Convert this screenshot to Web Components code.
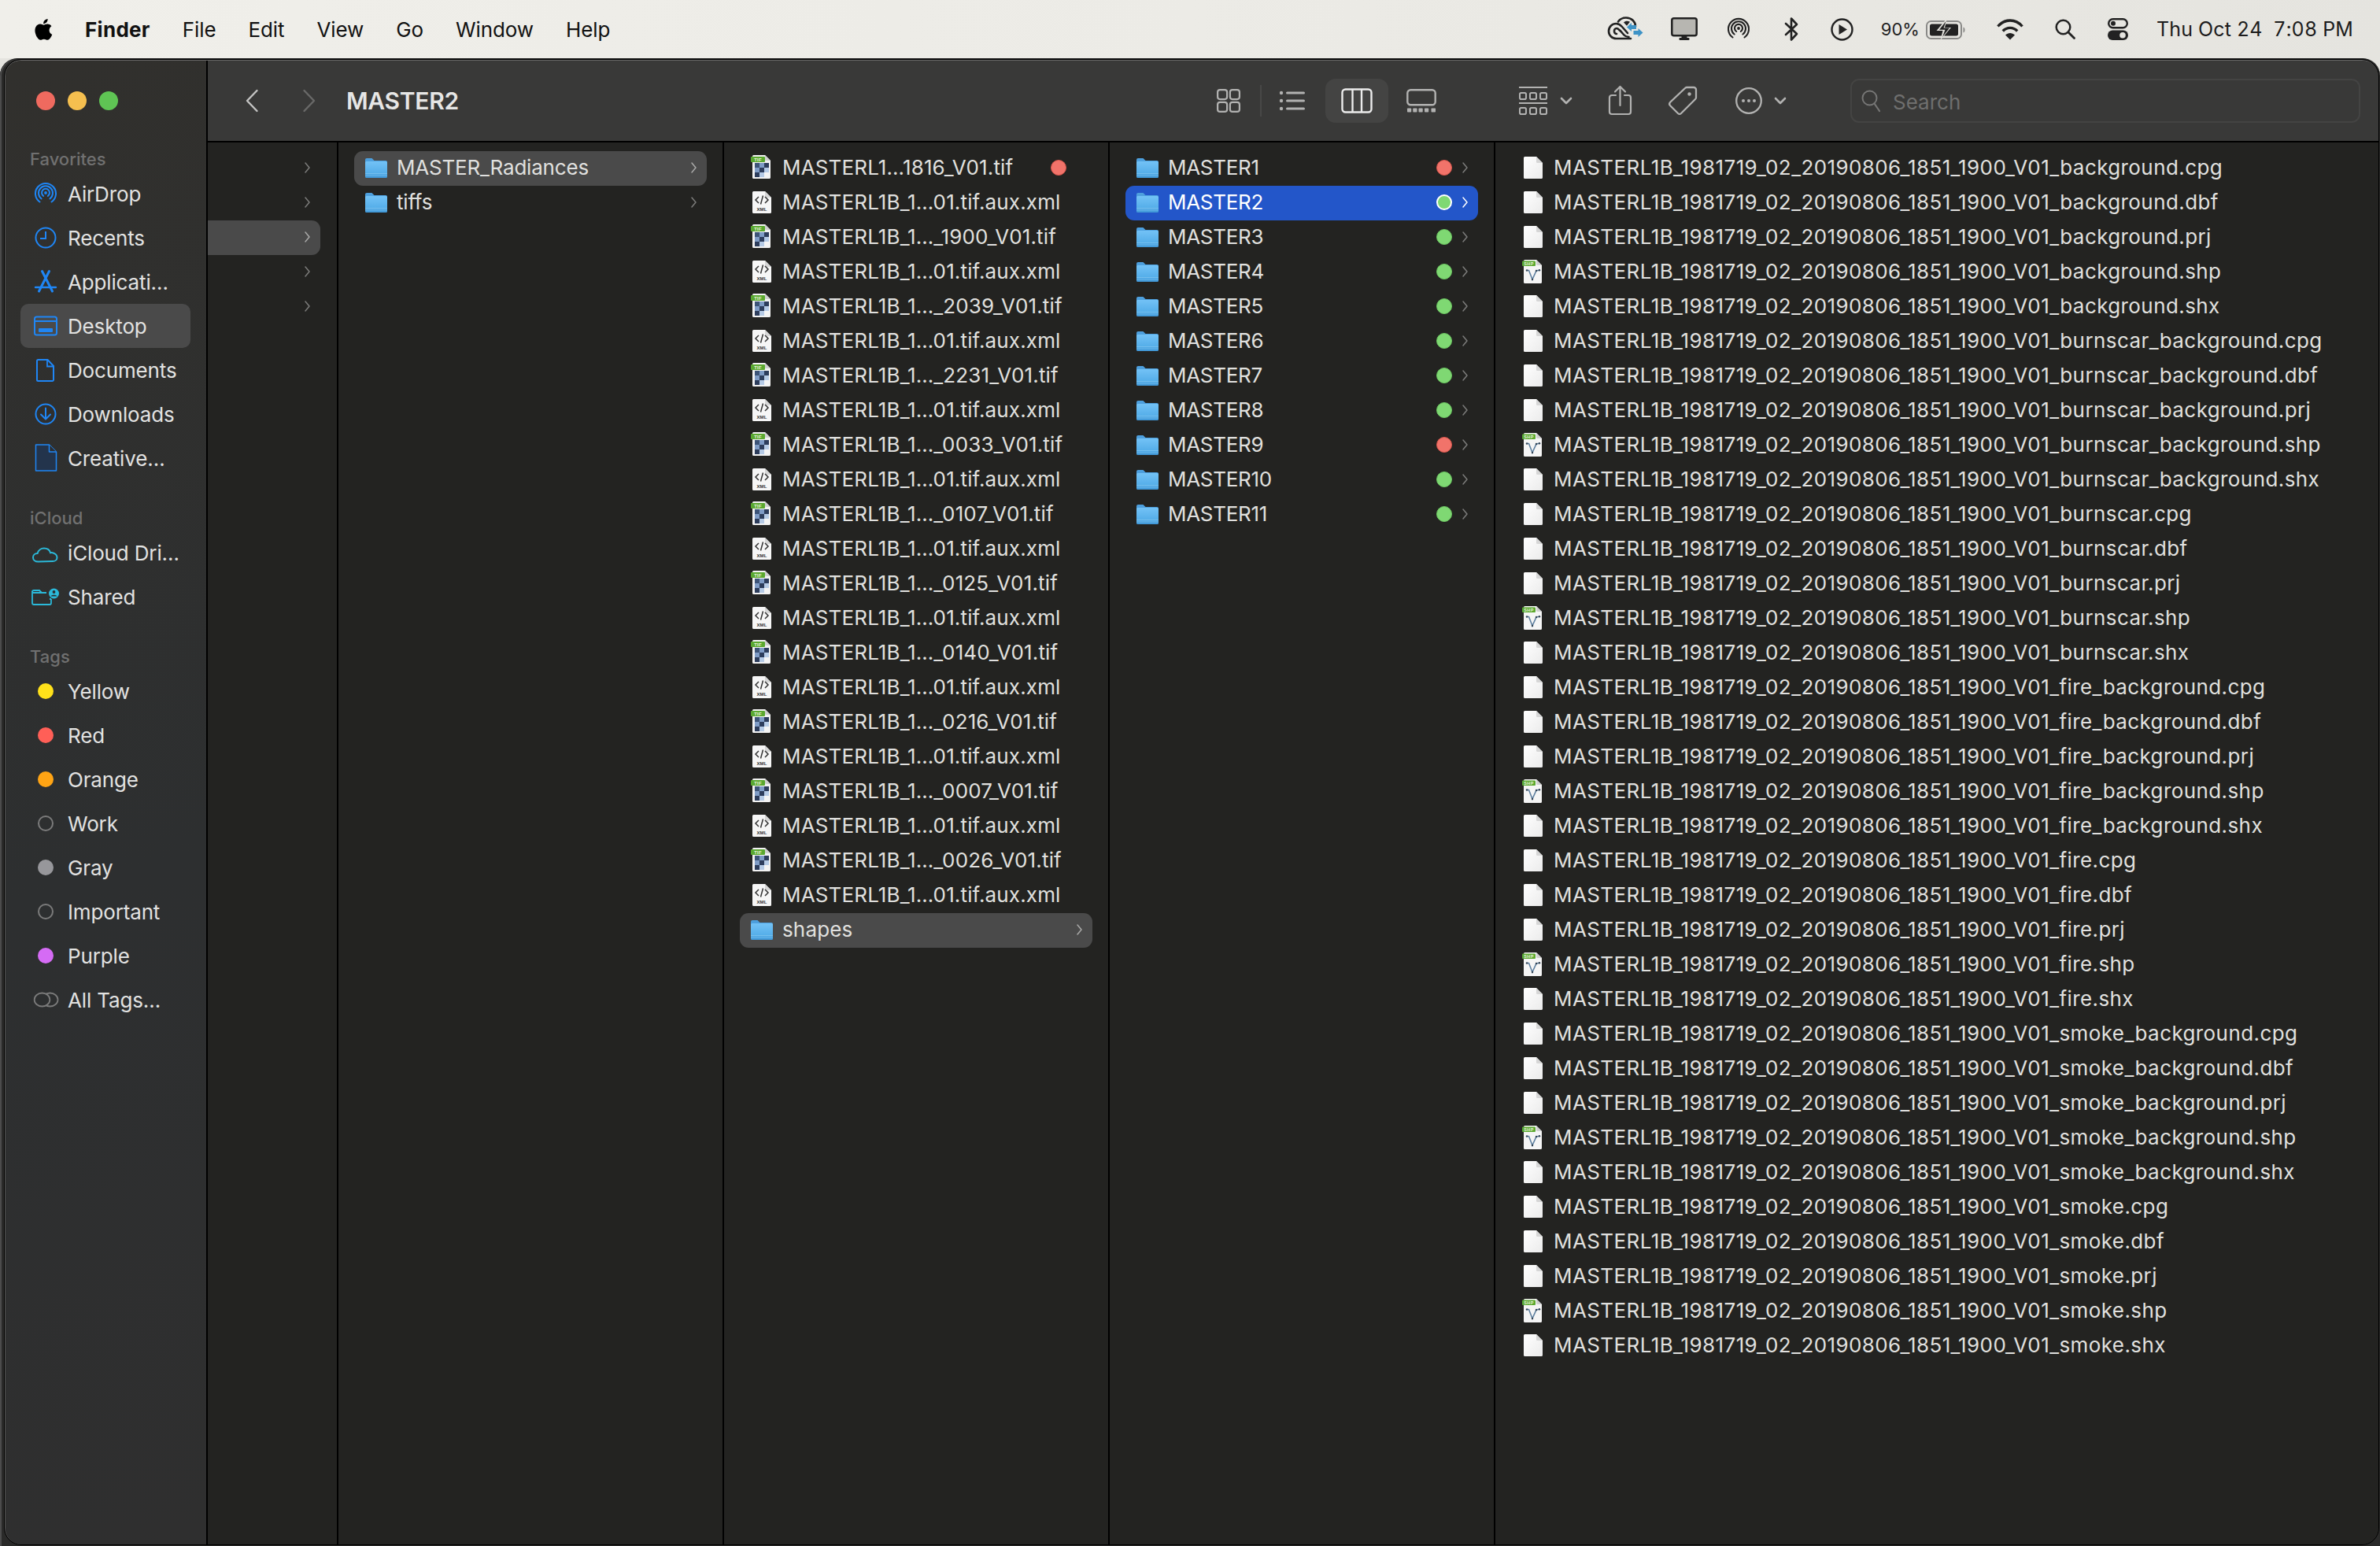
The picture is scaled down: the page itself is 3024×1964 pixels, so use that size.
<!DOCTYPE html>
<html lang="en">
<head>
<meta charset="utf-8">
<title>Finder</title>
<style>
html,body{margin:0;padding:0;height:100%;overflow:hidden;}
body{
    display:flex;
    flex-direction:column;
    background:#e5e4df;
    font-family:"Inter","Liberation Sans",sans-serif;
}
</style>
</head>
<body>
<mac-menubar>
    <menu-label slot="left" bold>Finder</menu-label>
    <menu-label slot="left">File</menu-label>
    <menu-label slot="left">Edit</menu-label>
    <menu-label slot="left">View</menu-label>
    <menu-label slot="left">Go</menu-label>
    <menu-label slot="left">Window</menu-label>
    <menu-label slot="left">Help</menu-label>
</mac-menubar>
<finder-window id="win"></finder-window>

<script>
// every drawing the page needs, [width, height, inner svg]
const TIF_GRID = [
    ['#3d5478','#7f9cc6','#2d3d5c'],
    ['#7f9cc6','#2d3d5c','#b6cbe6'],
    ['#2d3d5c','#b6cbe6','#f4f4f4'],
].map((row,r)=>row.map((c,i)=>`<rect x="${4+i*6}" y="${9+r*6}" width="6" height="6" fill="${c}"/>`).join('')).join('');

const DOC_SHAPE = 'M1.500 1H16l8 8V27.500A1.500 1.500 0 0 1 22.500 29H1.500A1.500 1.500 0 0 1 0 27.500V2.500A1.500 1.500 0 0 1 1.500 1z';
const DOC_DEFS = '<defs><linearGradient id="d" x1="0" y1="0" x2="1" y2="1"><stop offset="0" stop-color="#fff"/><stop offset="1" stop-color="#ebebeb"/></linearGradient></defs>';
const FOLD = '<path d="M16 1l8 8h-6.500A1.500 1.500 0 0 1 16 7.500z" fill="#d6d6d6"/>';
const TALL_DOC = 'M2.500-1H17l7 7V27.500A1.500 1.500 0 0 1 22.500 29H2.500A1.500 1.500 0 0 1 1 27.500V.5A1.500 1.500 0 0 1 2.500-1z';
const TALL_FOLD = '<path d="M17-1l7 7h-5.500A1.500 1.500 0 0 1 17 4.500z" fill="#d0d0d0"/>';

const ARCS = (col,sw) => `<g fill="none" stroke="${col}" stroke-width="${sw}" stroke-linecap="round">
    <path d="M7.500 25.500A13 13 0 1 1 22.500 25.500"/><path d="M9.600 21.500A9 9 0 1 1 20.400 21.500"/><path d="M12.200 18A5 5 0 1 1 17.800 18"/></g>
    <circle cx="15" cy="14" r="1.900" fill="${col}"/>`;

const ICONS = {
    apple:[26,31,'<path fill="#000" d="M21.600 16.400c0-3.400 2.800-5 2.900-5.100-1.600-2.300-4-2.600-4.900-2.700-2.100-.2-4.100 1.200-5.100 1.200-1.100 0-2.700-1.200-4.400-1.200C7.800 8.700 5.700 9.900 4.600 11.900 2.200 16 4 22.100 6.300 25.400c1.100 1.600 2.500 3.500 4.200 3.400 1.700-.1 2.300-1.100 4.400-1.100 2 0 2.600 1.100 4.400 1.100 1.800 0 3-1.600 4.100-3.300 1.300-1.900 1.800-3.700 1.900-3.800-.1 0-3.700-1.400-3.700-5.300zM18.200 6.300c.9-1.100 1.600-2.700 1.400-4.300-1.400.1-3 .9-4 2.100-.9 1-1.600 2.600-1.400 4.100 1.500.1 3.100-.8 4-1.900z"/>'],
    folder:[28,27,`<defs><linearGradient id="f" x1="0" y1="0" x2="0" y2="1"><stop offset="0" stop-color="#73c2f6"/><stop offset=".72" stop-color="#55aee9"/><stop offset="1" stop-color="#3f96d6"/></linearGradient></defs>
        <path d="M0 3a2 2 0 0 1 2-2h6.500l3 3H26a2 2 0 0 1 2 2v4H0z" fill="#4d9fdd"/>
        <path d="M0 6.500a1.500 1.500 0 0 1 1.500-1.500h25A1.500 1.500 0 0 1 28 6.500V24.500a1.500 1.500 0 0 1-1.500 1.500h-25A1.500 1.500 0 0 1 0 24.500z" fill="url(#f)"/>
        <rect y="20" width="28" height="1" fill="#8fcdf3" opacity=".55"/><rect y="22.500" width="28" height="1" fill="#8fcdf3" opacity=".45"/>`],
    doc:[24,30,`${DOC_DEFS}<path d="${DOC_SHAPE}" fill="url(#d)"/>${FOLD}`],
    tif:[26,30,`<path d="${TALL_DOC}" fill="#f2f2f2"/>${TALL_FOLD}${TIF_GRID}
        <rect x="-1" y="1" width="18" height="7" rx="1" fill="#5aa830"/><text x="8" y="7" text-anchor="middle" font-family="Liberation Sans" font-size="6" font-weight="700" fill="#eaf6df">TIF</text>`],
    xml:[24,30,`<path d="${DOC_SHAPE}" fill="#f6f6f6"/>${FOLD}
        <path d="M8 8l-4 4 4 4M16 8l4 4-4 4M13.500 6.500l-3 11" fill="none" stroke="#333" stroke-width="1.500"/>
        <text x="12" y="26" text-anchor="middle" font-family="Liberation Sans" font-size="6" font-weight="700" fill="#333">XML</text>`],
    shp:[26,31,`<g transform="translate(0 1)"><path d="${TALL_DOC}" fill="#f5f5f5"/>${TALL_FOLD}
        <path d="M5 12.500l2.500 0 4.500 11.500 5-11 4-.8" fill="none" stroke="#5d7f9f" stroke-width="1.600"/>
        <circle cx="5" cy="12.500" r="1.200" fill="#345"/><circle cx="12" cy="24" r="1.200" fill="#345"/><circle cx="17" cy="13" r="1.200" fill="#345"/><circle cx="21" cy="12.200" r="1.200" fill="#345"/></g>
        <rect x="-1" y="1.500" width="17" height="6.500" rx="1" fill="#5aa830"/><text x="7.500" y="7" text-anchor="middle" font-family="Liberation Sans" font-size="5.500" font-weight="700" fill="#eaf6df">SHP</text>`],
    back:[18,30,'<path d="M15.500 2 3 15l12.500 13" fill="none" stroke="#c4c4c3" stroke-width="2.400" stroke-linecap="round" stroke-linejoin="round"/>'],
    forward:[18,30,'<path d="M2.500 2 15 15 2.500 28" fill="none" stroke="#696968" stroke-width="2.400" stroke-linecap="round" stroke-linejoin="round"/>'],
    grid:[30,30,'<g fill="none" stroke="#b2b2b1" stroke-width="2.200"><rect x="1.100" y="1.100" width="12" height="12" rx="3"/><rect x="16.900" y="1.100" width="12" height="12" rx="3"/><rect x="1.100" y="16.900" width="12" height="12" rx="3"/><rect x="16.900" y="16.900" width="12" height="12" rx="3"/></g>'],
    list:[33,30,'<g fill="#b2b2b1" transform="translate(0 2)"><circle cx="3" cy="3" r="2.200"/><circle cx="3" cy="13" r="2.200"/><circle cx="3" cy="23" r="2.200"/><rect x="9" y="1.500" width="24" height="3" rx="1.500"/><rect x="9" y="11.500" width="24" height="3" rx="1.500"/><rect x="9" y="21.500" width="24" height="3" rx="1.500"/></g>'],
    columns:[40,32,'<g fill="none" stroke="#ececec" stroke-width="2.400"><rect x="1.500" y="1.500" width="37" height="29" rx="4"/><path d="M14.500 1.500v29M26 1.500v29"/></g>'],
    gallery:[38,30,'<rect x="1.300" y="1.300" width="35.400" height="19" rx="4" fill="none" stroke="#b2b2b1" stroke-width="2.400"/><g fill="#b2b2b1"><rect x="1" y="24.500" width="5.200" height="5" rx=".8"/><rect x="8.300" y="24.500" width="5.200" height="5" rx=".8"/><rect x="15.500" y="24.500" width="5.200" height="5" rx=".8"/><rect x="23" y="24.500" width="5.200" height="5" rx=".8"/><rect x="31.500" y="24.500" width="5.500" height="5" rx=".8"/></g>'],
    group:[36,36,'<g fill="none" stroke="#b2b2b1" stroke-width="2"><path d="M0 1h36M0 21h36" stroke-width="2.200"/><rect x="1" y="8" width="8" height="8" rx="1.800"/><rect x="14" y="8" width="8" height="8" rx="1.800"/><rect x="27" y="8" width="8" height="8" rx="1.800"/><rect x="1" y="27" width="8" height="8" rx="1.800"/><rect x="14" y="27" width="8" height="8" rx="1.800"/><rect x="27" y="27" width="8" height="8" rx="1.800"/></g>'],
    chevdown:[16,10,'<path d="M2 2l6 6 6-6" fill="none" stroke="#b2b2b1" stroke-width="2.600" stroke-linecap="round" stroke-linejoin="round"/>'],
    share:[29,38,'<g fill="none" stroke="#b2b2b1" stroke-width="2.200" stroke-linecap="round" stroke-linejoin="round"><path d="M9 12H4a3 3 0 0 0-3 3v18a3 3 0 0 0 3 3h21a3 3 0 0 0 3-3V15a3 3 0 0 0-3-3h-5"/><path d="M14.500 25V1.500M8 7.500l6.500-6.500L21 7.500"/></g>'],
    tag:[38,38,'<path d="M24 2h9a3 3 0 0 1 3 3v10a3 3 0 0 1-1 2L17 35a3 3 0 0 1-4 0L3 25a3 3 0 0 1 0-4L22 3a3 3 0 0 1 2-1z" fill="none" stroke="#b2b2b1" stroke-width="2.300"/><circle cx="27.500" cy="10.500" r="2.200" fill="#b2b2b1"/>'],
    more:[34,34,'<circle cx="17" cy="17" r="15.800" fill="none" stroke="#b2b2b1" stroke-width="2.300"/><g fill="#b2b2b1"><circle cx="10" cy="17" r="2"/><circle cx="17" cy="17" r="2"/><circle cx="24" cy="17" r="2"/></g>'],
    lens:[24,28,'<circle cx="10.500" cy="10.500" r="9" fill="none" stroke="#767675" stroke-width="2"/><path d="M16.500 17.500 23 27" stroke="#767675" stroke-width="2.200" stroke-linecap="round"/>'],
    airdrop:[36,36,`<g transform="translate(3 3)">${ARCS('#1f86f5',2)}</g>`],
    recents:[36,36,'<circle cx="18" cy="18" r="12.500" fill="none" stroke="#1f86f5" stroke-width="2"/><path d="M18 10v9h-7" fill="none" stroke="#1f86f5" stroke-width="2"/>'],
    apps:[36,36,'<g fill="none" stroke="#1f86f5" stroke-width="3" stroke-linecap="round"><path d="M22.500 4.500 9.500 30M13.500 4.500 26.500 30"/><path d="M5 25h26" stroke-width="2.400"/></g>'],
    desktop:[36,36,'<rect x="4" y="6.500" width="28" height="23" rx="2.500" fill="none" stroke="#1f86f5" stroke-width="2"/><path d="M4 12h28" stroke="#1f86f5" stroke-width="2"/><rect x="9" y="21" width="18" height="5" rx="1" fill="#1f86f5"/>'],
    docs:[36,36,'<path d="M8.500 5h12l7.500 8v17.500a1.500 1.500 0 0 1-1.500 1.500h-18A1.500 1.500 0 0 1 7 30.500V6.500A1.500 1.500 0 0 1 8.500 5z" fill="none" stroke="#1f86f5" stroke-width="2"/><path d="M20 5v8.500h8" fill="none" stroke="#1f86f5" stroke-width="1.800"/>'],
    downloads:[36,36,'<circle cx="18" cy="18" r="12.500" fill="none" stroke="#1f86f5" stroke-width="2"/><path d="M18 10.500V24M12 18.500l6 6 6-6" fill="none" stroke="#1f86f5" stroke-width="2" stroke-linecap="round" stroke-linejoin="round"/>'],
    creative:[36,36,'<path d="M5.500 1h17l9 9v24h-26z" fill="#23344c" stroke="#1f86f5" stroke-width="1.500" stroke-linejoin="round"/><path d="M22.500 1v9h9" fill="#2c2e30" stroke="#1f86f5" stroke-width="1.500" stroke-linejoin="round"/>'],
    cloud:[36,36,'<path d="M8.500 29.500C4.500 29.500 2 27 2 24.200c0-3 2.300-5.200 5.600-5.200 1-4 4.500-6.500 8.400-6.500 4 0 7 2.300 8.100 5.700 1-.3 1.900-.3 2.800 0 1 .3 1.500.5 2 1 2.300 1 3.600 3 3.600 5.200 0 2.800-2.700 4.600-5.500 4.600z" fill="none" stroke="#2bb9d9" stroke-width="2"/>'],
    shared:[36,36,'<path d="M1 12a2 2 0 0 1 2-2h7l3 3h6M1 13h18" fill="none" stroke="#2bb9d9" stroke-width="1.800"/><path d="M1 11v15a2 2 0 0 0 2 2h20a2 2 0 0 0 2-2v-5" fill="none" stroke="#2bb9d9" stroke-width="1.800"/><circle cx="28.500" cy="14" r="6.500" fill="#2bb9d9"/><circle cx="28.500" cy="12" r="1.900" fill="#2c2e30"/><path d="M24.500 17.500c.8-2.300 7.200-2.300 8 0z" fill="#2c2e30"/><path d="M25 21h-2" stroke="#2bb9d9" stroke-width="1.800"/>'],
    alltags:[36,36,'<g fill="none" stroke="#7b7b7b" stroke-width="1.800"><ellipse cx="23.500" cy="18" rx="10" ry="8.500"/><ellipse cx="13.500" cy="18" rx="9.800" ry="8.500" fill="#2d2f30"/></g>'],
    cc:[46,32,`<g fill="none" stroke="#222" stroke-width="2.600" stroke-linecap="round"><path d="M30 28H11.500a9.500 9.500 0 1 1 0-19c3.500 0 5.500 1.800 7.500 4l7 8"/><path d="M12 22c-4 0-4-7 0-7 2 0 3.500 2 5.500 4l4 4.500c1.200 1.300 3 2.500 6 2.500"/><path d="M14 6.500C16.500 3 20 1.500 24 1.500c7 0 12 5 12 11"/></g><path d="M21 7.500c2-2 5-2.500 8-.8l-4 5z" fill="#222"/><g fill="#3e93c6"><path d="M25 13.500l6-5.500v3h6v5h-6v3z"/><path d="M45.500 20.500l-6-5.500v3h-6v5h6v3z"/></g>`],
    display:[34,30,'<rect x="1.300" y="1.300" width="31.400" height="22" rx="2.500" fill="#b7b6b1" stroke="#222" stroke-width="2.500"/><rect x="13.500" y="24" width="7" height="3" fill="#222"/><rect x="10.500" y="26" width="13" height="3" rx="1" fill="#222"/>'],
    airplay:[30,30,ARCS('#222',2.100)],
    bt:[18,30,'<path d="M2 8 16 21l-7 7.500V1.500L16 9 2 22" fill="none" stroke="#222" stroke-width="2.600" stroke-linejoin="round" stroke-linecap="round"/>'],
    play:[29,29,'<circle cx="14.500" cy="14.500" r="13" fill="none" stroke="#222" stroke-width="2.400"/><path d="M10.500 8l10.500 6.500-10.500 6.500z" fill="#222"/>'],
    battery:[50,26,'<rect x="1" y="3" width="44" height="22" rx="5.500" fill="none" stroke="#8a8a88" stroke-width="2"/><rect x="5" y="6.500" width="36" height="15" rx="2.500" fill="#222"/><path d="M47.500 10.500c1.500.5 2 1.800 2 3.500s-.5 3-2 3.500z" fill="#8a8a88"/><path d="M27 -1 13.500 15h8L18.500 27l13.500-16h-8z" fill="#e5e4df"/><path d="M25.500 3 17 13.800h7.500L21 23l9-11.500h-7.500z" fill="#222"/>'],
    wifi:[34,26,'<g fill="none" stroke="#222" stroke-width="3.400"><path d="M1.500 9.500C10-.5 24-.5 32.500 9.500"/><path d="M7.800 15.500C13 10 21 10 26.200 15.500"/></g><path d="M11 20.500C14.500 17 19.500 17 23 20.500L17 26.500z" fill="#222"/>'],
    search:[26,26,'<circle cx="10.500" cy="10.500" r="8.800" fill="none" stroke="#222" stroke-width="2.500"/><path d="M17 17l7.500 7.500" stroke="#222" stroke-width="2.800" stroke-linecap="round"/>'],
    control:[26,28,'<rect x="1.200" y="1.200" width="23.600" height="11" rx="5.500" fill="none" stroke="#222" stroke-width="2.400"/><circle cx="7" cy="6.700" r="3" fill="#222"/><rect y="15.500" width="26" height="12.500" rx="6.200" fill="#222"/><circle cx="19" cy="21.700" r="3.800" fill="#e5e4df"/>'],
    chev:[7,14,'<path d="M1 1l5 6-5 6" fill="none" stroke="currentColor" stroke-width="1.500" stroke-linecap="round" stroke-linejoin="round"/>'],
};

class SymIcon extends HTMLElement{
    connectedCallback(){
        const [w,h,inner] = ICONS[this.getAttribute('name')];
        const shadow = this.shadowRoot || this.attachShadow({mode:"open"});
        shadow.innerHTML = `
        <style>
        :host{display:block;flex:none;width:${w}px;height:${h}px;line-height:0;}
        svg{display:block;overflow:visible;}
        </style>
        <svg width="${w}" height="${h}" viewBox="0 0 ${w} ${h}">${inner}</svg>`;
    }
}

class MenuLabel extends HTMLElement{
    constructor(){
        super();
        this.attachShadow({mode:"open"}).innerHTML = `
        <style>
        :host{display:block;font-size:26px;color:#111;letter-spacing:-.1px;white-space:nowrap;}
        :host([bold]){font-weight:700;letter-spacing:.3px;}
        </style>
        <slot></slot>`;
    }
}

class MacMenubar extends HTMLElement{
    constructor(){
        super();
        this.attachShadow({mode:"open"}).innerHTML = `
        <style>
        :host{
            display:flex;flex:none;height:74px;align-items:center;
            background:linear-gradient(90deg,#f0efea,#ecebe6 50%,#e5e4df);
            padding:0 34px 0 41px;box-sizing:border-box;
        }
        .left{display:flex;align-items:center;gap:41px;margin-left:41px;}
        .right{display:flex;align-items:center;margin-left:auto;}
        .pct{font-size:22px;color:#222;margin:0 8px 0 35px;}
        .clock{font-size:25px;color:#1c1c1c;white-space:pre;margin-left:36px;font-variant-numeric:tabular-nums;letter-spacing:.15px;}
        </style>
        <sym-icon name="apple"></sym-icon>
        <div class="left"><slot name="left"></slot></div>
        <div class="right">
            <sym-icon name="cc"></sym-icon>
            <sym-icon name="display" style="margin-left:35px"></sym-icon>
            <sym-icon name="airplay" style="margin-left:37px"></sym-icon>
            <sym-icon name="bt" style="margin-left:43px"></sym-icon>
            <sym-icon name="play" style="margin-left:41px"></sym-icon>
            <span class="pct">90%</span>
            <sym-icon name="battery"></sym-icon>
            <sym-icon name="wifi" style="margin-left:40px"></sym-icon>
            <sym-icon name="search" style="margin-left:40px"></sym-icon>
            <sym-icon name="control" style="margin-left:41px"></sym-icon>
            <span class="clock">Thu Oct 24  7:08 PM</span>
        </div>`;
    }
}

class SideHead extends HTMLElement{
    constructor(){
        super();
        this.attachShadow({mode:"open"}).innerHTML = `
        <style>
        :host{display:flex;align-items:center;height:32px;padding-left:31px;font-size:22px;font-weight:500;color:#707070;}
        :host(:not(:first-child)){margin-top:32px;}
        </style>
        <slot></slot>`;
    }
}

class SideItem extends HTMLElement{
    constructor(){
        super();
        const icon = this.getAttribute('icon');
        const tag = this.getAttribute('tag');
        const hollow = tag === 'none';
        this.attachShadow({mode:"open"}).innerHTML = `
        <style>
        :host{
            display:flex;align-items:center;gap:10px;height:56px;
            margin:0 20px 0 19px;padding-left:14px;border-radius:10px;
            font-size:26px;color:#e2e2e1;white-space:nowrap;letter-spacing:-.15px;
        }
        :host([active]){background:#4a4a4a;}
        .slot{width:36px;height:36px;flex:none;display:flex;align-items:center;justify-content:center;}
        .dot{width:20px;height:20px;border-radius:50%;box-sizing:border-box;
             background:${hollow?'transparent':tag};${hollow?'border:2px solid #7b7b7b;':''}}
        </style>
        <div class="slot">${icon?`<sym-icon name="${icon}"></sym-icon>`:`<div class="dot"></div>`}</div>
        <slot></slot>`;
    }
}

class FinderSidebar extends HTMLElement{
    constructor(){
        super();
        this.attachShadow({mode:"open"}).innerHTML = `
        <style>
        :host{
            display:flex;flex-direction:column;flex:none;width:255px;
            border-right:2px solid #000;
            background:linear-gradient(165deg,#31302d,#2d2f30 55%,#2f2f2f);
        }
        .lights{display:flex;gap:16px;padding:39px 0 46px 39px;}
        .lights i{width:24px;height:24px;border-radius:50%;}
        </style>
        <div class="lights">
            <i style="background:#ef6a5f"></i><i style="background:#f5bf4f"></i><i style="background:#5fc454"></i>
        </div>
        <slot></slot>`;
    }
}

class FinderToolbar extends HTMLElement{
    constructor(){
        super();
        this.attachShadow({mode:"open"}).innerHTML = `
        <style>
        :host{
            display:flex;flex:none;align-items:center;height:104px;box-sizing:border-box;
            padding-right:23px;background:#393938;border-bottom:2px solid #000;
        }
        h1{margin:0 auto 0 38px;font-size:30px;font-weight:600;color:#e6e6e5;letter-spacing:-.3px;}
        .sep{width:2px;height:40px;background:#484847;margin-left:25px;flex:none;}
        .on{display:flex;align-items:center;justify-content:center;flex:none;width:80px;height:56px;
            background:#444443;border-radius:13px;margin-left:26px;}
        .search{
            display:flex;align-items:center;gap:16px;flex:none;box-sizing:border-box;
            width:648px;height:56px;margin-left:81px;padding-left:12px;
            border:2px solid #444443;border-radius:11px;
            font-size:26px;color:#6f6f6e;
        }
        .search span{padding-top:3px;}
        </style>
        <sym-icon name="back" style="margin-left:47px"></sym-icon>
        <sym-icon name="forward" style="margin-left:55px"></sym-icon>
        <h1><slot></slot></h1>
        <sym-icon name="grid"></sym-icon>
        <div class="sep"></div>
        <sym-icon name="list" style="margin-left:22px"></sym-icon>
        <div class="on"><sym-icon name="columns"></sym-icon></div>
        <sym-icon name="gallery" style="margin-left:23px"></sym-icon>
        <sym-icon name="group" style="margin-left:105px"></sym-icon>
        <sym-icon name="chevdown" style="margin-left:16px"></sym-icon>
        <sym-icon name="share" style="margin-left:46px"></sym-icon>
        <sym-icon name="tag" style="margin-left:46px"></sym-icon>
        <sym-icon name="more" style="margin-left:48px"></sym-icon>
        <sym-icon name="chevdown" style="margin-left:15px"></sym-icon>
        <div class="search"><sym-icon name="lens"></sym-icon><span>Search</span></div>`;
    }
}

class FinderRow extends HTMLElement{
    constructor(){
        super();
        const icon = this.getAttribute('icon');
        const dot = this.getAttribute('dot');
        const chev = this.hasAttribute('chev');
        this.attachShadow({mode:"open"}).innerHTML = `
        <style>
        :host{
            display:flex;align-items:center;height:44px;margin:0 20px;padding:0 13px 2px 14px;box-sizing:border-box;
            border-radius:11px;font-size:26px;color:#e0e0df;white-space:nowrap;
            letter-spacing:var(--track,0);
            flex:none;
        }
        :host([sel="gray"]){background:#4a4a4a;}
        :host([sel="blue"]){background:#2356c9;color:#fff;}
        .ic{width:28px;height:42px;flex:none;display:flex;align-items:center;justify-content:center;margin-right:12px;}
        .name{flex:1;min-width:0;padding-bottom:2px;}
        .dot{width:20px;height:20px;border-radius:50%;box-sizing:border-box;flex:none;margin-right:13px;}
        .red{background:#f1736a;border:1px solid #d9564c;}
        .green{background:#7fd873;border:1px solid #6cc761;}
        :host([sel="blue"]) .green{border:2px solid #fff;}
        .chev{flex:none;width:7px;height:14px;color:#7c7c7b;}
        :host([sel]) .chev{color:#a9a9a8;}
        :host([sel="blue"]) .chev{color:#fff;}
        .hide{visibility:hidden;}
        </style>
        ${icon?`<div class="ic"><sym-icon name="${icon}"></sym-icon></div>`:''}
        <div class="name"><slot></slot></div>
        ${dot?`<div class="dot ${dot}"></div>`:''}
        <sym-icon class="chev ${chev?'':'hide'}" name="chev"></sym-icon>`;
    }
}

class FinderColumn extends HTMLElement{
    constructor(){
        super();
        this.attachShadow({mode:"open"}).innerHTML = `
        <style>
        :host{
            display:flex;flex-direction:column;flex:none;box-sizing:border-box;
            padding-top:11px;background:#232321;border-right:2px solid #000;width:490px;overflow:hidden;
        }
        :host([first]){width:166px;}
        :host([first]) ::slotted(finder-row){margin:0 21px 0 0;border-radius:0 11px 11px 0;}
        :host([last]){flex:1;width:auto;border-right:0;}
        </style>
        <slot></slot>`;
    }
}

class FinderWindow extends HTMLElement{
    constructor(){
        super();
        this.attachShadow({mode:"open"}).innerHTML = `
        <style>
        :host{
            display:flex;flex:1;min-height:0;box-sizing:border-box;
            padding:0 1px 1px 5px;
            background:#2a2a29;border-top:1px solid #1c1c1c;
            border-radius:22px 22px 0 0;box-shadow:inset 2px 0 0 #4c4c4c;
        }
        .frame{
            flex:1;min-width:0;display:flex;border:1px solid #000;border-radius:22px;overflow:hidden;
        }
        .inner{
            flex:1;min-width:0;display:flex;border-top:1px solid #6a6a69;border-left:1px solid #565655;border-radius:21px;overflow:hidden;
        }
        .main{flex:1;min-width:0;display:flex;flex-direction:column;}
        .cols{flex:1;min-height:0;display:flex;}
        </style>
        <div class="frame"><div class="inner">
            <slot name="side"></slot>
            <div class="main"><slot name="bar"></slot><div class="cols"><slot></slot></div></div>
        </div></div>`;
    }
}

[
    ['sym-icon',SymIcon],['menu-label',MenuLabel],['mac-menubar',MacMenubar],
    ['side-head',SideHead],['side-item',SideItem],['finder-sidebar',FinderSidebar],
    ['finder-toolbar',FinderToolbar],['finder-row',FinderRow],['finder-column',FinderColumn],
    ['finder-window',FinderWindow],
].forEach(([n,c])=>customElements.define(n,c));

// page content
const P = 'MASTERL1B_1981719_02_20190806_1851_1900_V01_';
const el = (html) => { const t = document.createElement('template'); t.innerHTML = html.trim(); return t.content; };

const sideHtml = `
<finder-sidebar slot="side">
    <side-head>Favorites</side-head>
    <side-item icon="airdrop">AirDrop</side-item>
    <side-item icon="recents">Recents</side-item>
    <side-item icon="apps">Applicati…</side-item>
    <side-item icon="desktop" active>Desktop</side-item>
    <side-item icon="docs">Documents</side-item>
    <side-item icon="downloads">Downloads</side-item>
    <side-item icon="creative">Creative…</side-item>
    <side-head>iCloud</side-head>
    <side-item icon="cloud">iCloud Dri…</side-item>
    <side-item icon="shared">Shared</side-item>
    <side-head>Tags</side-head>
    <side-item tag="#ffe11a">Yellow</side-item>
    <side-item tag="#ff5f57">Red</side-item>
    <side-item tag="#ffa414">Orange</side-item>
    <side-item tag="none">Work</side-item>
    <side-item tag="#97979b">Gray</side-item>
    <side-item tag="none">Important</side-item>
    <side-item tag="#d56bf5">Purple</side-item>
    <side-item icon="alltags">All Tags…</side-item>
</finder-sidebar>
<finder-toolbar slot="bar">MASTER2</finder-toolbar>`;

const col1 = [0,1,2,3,4].map(i=>`<finder-row chev ${i===2?'sel="gray"':''}></finder-row>`).join('');
const col2 = `<finder-row icon="folder" chev sel="gray">MASTER_Radiances</finder-row><finder-row icon="folder" chev>tiffs</finder-row>`;

const tifs = ['…1816_V01.tif','_1…_1900_V01.tif','_1…_2039_V01.tif','_1…_2231_V01.tif','_1…_0033_V01.tif','_1…_0107_V01.tif',
              '_1…_0125_V01.tif','_1…_0140_V01.tif','_1…_0216_V01.tif','_1…_0007_V01.tif','_1…_0026_V01.tif'];
let col3 = '';
tifs.forEach((t,i)=>{
    const name = i===0 ? 'MASTERL1'+t : 'MASTERL1B'+t;
    col3 += `<finder-row icon="tif" ${i===0?'dot="red"':''}>${name}</finder-row>`;
    col3 += `<finder-row icon="xml">MASTERL1B_1…01.tif.aux.xml</finder-row>`;
});
col3 += `<finder-row icon="folder" chev sel="gray">shapes</finder-row>`;

const reds = [1,9];
let col4 = '';
for(let i=1;i<=11;i++){
    col4 += `<finder-row icon="folder" chev dot="${reds.includes(i)?'red':'green'}" ${i===2?'sel="blue"':''}>MASTER${i}</finder-row>`;
}

let col5 = '';
['background','burnscar_background','burnscar','fire_background','fire','smoke_background','smoke'].forEach(s=>{
    ['cpg','dbf','prj','shp','shx'].forEach(ext=>{
        col5 += `<finder-row icon="${ext==='shp'?'shp':'doc'}">${P}${s}.${ext}</finder-row>`;
    });
});

// digits run wider in the reference, so each column gets its own tracking
document.getElementById('win').append(el(sideHtml + `
    <finder-column first>${col1}</finder-column>
    <finder-column style="--track:-.2px">${col2}</finder-column>
    <finder-column style="--track:.15px">${col3}</finder-column>
    <finder-column style="--track:-.3px">${col4}</finder-column>
    <finder-column last style="--track:.41px">${col5}</finder-column>`));
</script>
</body>
</html>
